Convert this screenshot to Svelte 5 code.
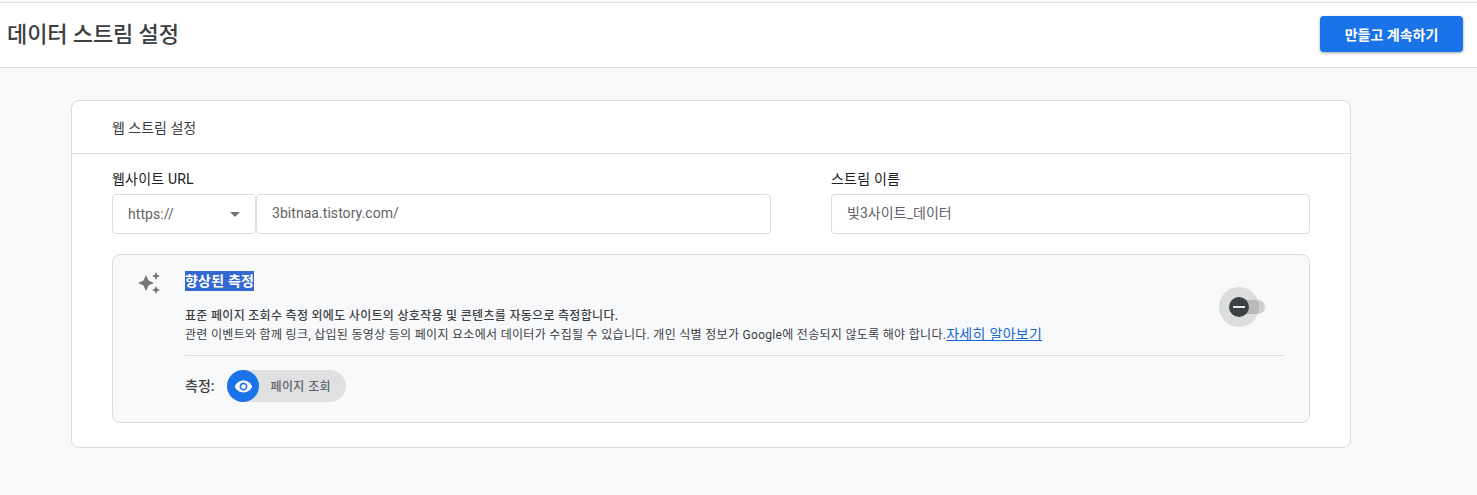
<script>
  let protocol = 'https://';
  let url = '3bitnaa.tistory.com/';
  let streamName = '빛3사이트_데이터';
</script>

<div class="page">
  <header class="topbar">
    <h1>데이터 스트림 설정</h1>
    <button class="primary">만들고 계속하기</button>
  </header>

  <main class="content">
    <section class="card">
      <div class="card-title">웹 스트림 설정</div>
      <div class="fields">
        <div class="field site">
          <span class="label">웹사이트 URL</span>
          <div class="url-row">
            <div class="box select">
              <span>{protocol}</span>
              <span class="caret"></span>
            </div>
            <div class="box url">{url}</div>
          </div>
        </div>
        <div class="field name">
          <span class="label">스트림 이름</span>
          <div class="box">{streamName}</div>
        </div>
      </div>

      <div class="measure">
        <svg class="sparkle" viewBox="0 0 24 24" width="24" height="24" fill="#757575">
          <path d="M19 9l1.25-2.75L23 5l-2.75-1.25L19 1l-1.25 2.75L15 5l2.75 1.25zM11.5 9.5L9 4 6.500 9.500 1 12l5.500 2.500L9 20l2.500-5.500L17 12zM19 15l-1.250 2.750L15 19l2.750 1.250L19 23l1.250-2.750L23 19l-2.750-1.250z" />
        </svg>
        <div class="measure-body">
          <div class="measure-top">
            <div class="measure-text">
              <div class="heading"><span class="selected">향상된 측정</span></div>
              <p class="lead">표준 페이지 조회수 측정 외에도 사이트의 상호작용 및 콘텐츠를 자동으로 측정합니다.</p>
              <p class="desc">관련 이벤트와 함께 링크, 삽입된 동영상 등의 페이지 요소에서 데이터가 수집될 수 있습니다. 개인 식별 정보가 Google에 전송되지 않도록 해야 합니다.<a href="#learn">자세히 알아보기</a></p>
            </div>
            <div class="toggle">
              <span class="track"></span>
              <span class="halo"></span>
              <span class="thumb"><span class="dash"></span></span>
            </div>
          </div>
          <div class="measure-foot">
            <span class="foot-label">측정:</span>
            <span class="chip">
              <span class="chip-icon">
                <svg viewBox="0 0 24 24" width="19" height="19" fill="#fff">
                  <path d="M12 4.500C7 4.500 2.730 7.610 1 12c1.730 4.390 6 7.500 11 7.500s9.270-3.110 11-7.500c-1.730-4.390-6-7.500-11-7.500zM12 17c-2.760 0-5-2.240-5-5s2.240-5 5-5 5 2.240 5 5-2.240 5-5 5zm0-8c-1.660 0-3 1.340-3 3s1.340 3 3 3 3-1.340 3-3-1.340-3-3-3z" />
                </svg>
              </span>
              <span class="chip-text">페이지 조회</span>
            </span>
          </div>
        </div>
      </div>
    </section>
  </main>
</div>

<style>
  :global(body) {
    margin: 0;
    background: #f8f9fa;
  }

  .page {
    height: 495px;
    overflow: hidden;
    font-family: Roboto, "Noto Sans CJK KR", sans-serif;
    color: #3c4043;
    background: #f8f9fa;
  }

  .topbar {
    display: flex;
    align-items: center;
    justify-content: space-between;
    box-sizing: border-box;
    height: 66px;
    margin-top: 2px;
    padding: 0 14px 0 7px;
    background: #fff;
    border-top: 1px solid #dadce0;
    border-bottom: 1px solid #dadce0;
  }

  h1 {
    margin: 0 0 6px;
    font-size: 22px;
    font-weight: 500;
    letter-spacing: -0.1px;
    color: #3c4043;
  }

  .primary {
    width: 143px;
    height: 36px;
    margin-bottom: 2px;
    border: none;
    border-radius: 4px;
    background: #1a73e8;
    color: #fff;
    font-family: inherit;
    font-size: 14px;
    font-weight: 700;
    box-shadow: 0 1px 2px rgba(60, 64, 67, 0.3), 0 1px 3px 1px rgba(60, 64, 67, 0.15);
  }

  .content {
    padding: 32px 126px 0 71px;
  }

  .card {
    box-sizing: border-box;
    height: 348px;
    background: #fff;
    border: 1px solid #dadce0;
    border-radius: 8px;
  }

  .card-title {
    box-sizing: border-box;
    height: 53px;
    padding: 17px 40px 0;
    font-size: 14px;
    line-height: 20px;
    color: #3c4043;
    border-bottom: 1px solid #dadce0;
  }

  .fields {
    display: flex;
    justify-content: space-between;
    padding: 15px 40px 0;
  }

  .field.site {
    width: 659px;
  }

  .field.name {
    width: 479px;
  }

  .label {
    display: block;
    font-size: 14px;
    line-height: 20px;
    letter-spacing: 0.2px;
    margin-bottom: 5px;
    color: #202124;
  }

  .url-row {
    display: flex;
  }

  .box {
    box-sizing: border-box;
    height: 40px;
    padding: 0 15px;
    border: 1px solid #dadce0;
    border-radius: 4px;
    font-size: 14px;
    line-height: 36px;
    letter-spacing: 0.05px;
    color: #5f6368;
    background: #fff;
  }

  .select {
    display: flex;
    align-items: center;
    justify-content: space-between;
    width: 144px;
    flex: none;
    padding-right: 15px;
  }

  .url {
    flex: 1;
  }

  .caret {
    width: 0;
    height: 0;
    border-left: 5px solid transparent;
    border-right: 5px solid transparent;
    border-top: 5px solid #757575;
  }

  .measure {
    box-sizing: border-box;
    display: flex;
    height: 169px;
    margin: 20px 40px 0;
    padding: 16px 24px 0 24px;
    background: #f8f9fa;
    border: 1px solid #dadce0;
    border-radius: 8px;
  }

  .sparkle {
    flex: none;
  }

  .measure-body {
    flex: 1;
    margin-left: 24px;
  }

  .measure-top {
    display: flex;
    justify-content: space-between;
    height: 84px;
    border-bottom: 1px solid #dadce0;
  }

  .heading {
    font-size: 14px;
    font-weight: 700;
    line-height: 20px;
    letter-spacing: 0.2px;
  }

  .selected {
    display: inline-block;
    background: #3367d1;
    color: #fff;
  }

  .lead {
    margin: 16px 0 0;
    font-size: 12px;
    font-weight: 500;
    line-height: 18px;
    letter-spacing: 0.3px;
    color: #3c4043;
  }

  .desc {
    margin: 0;
    font-size: 12px;
    line-height: 18px;
    letter-spacing: 0.3px;
    color: #3c4043;
  }

  .desc a {
    font-size: 14px;
    letter-spacing: 0.3px;
    color: #1967d2;
    text-decoration: underline;
  }

  .toggle {
    position: relative;
    flex: none;
    width: 47px;
    height: 40px;
    margin: 16px 19px 0 0;
  }

  .track {
    position: absolute;
    left: 18px;
    top: 13px;
    width: 28px;
    height: 14px;
    border-radius: 7px;
    background: #cfcfcf;
  }

  .halo {
    position: absolute;
    left: 0;
    top: 0;
    width: 40px;
    height: 40px;
    border-radius: 50%;
    background: rgba(60, 64, 67, 0.15);
  }

  .thumb {
    position: absolute;
    left: 10px;
    top: 10px;
    display: flex;
    align-items: center;
    justify-content: center;
    width: 20px;
    height: 20px;
    border-radius: 50%;
    background: #3c4043;
  }

  .dash {
    width: 12px;
    height: 2px;
    background: #e8e8e8;
  }

  .measure-foot {
    display: flex;
    align-items: center;
    gap: 13px;
    margin-top: 14px;
  }

  .foot-label {
    margin-top: -2px;
    font-size: 14px;
    font-weight: 500;
    color: #3c4043;
  }

  .chip {
    display: flex;
    align-items: center;
    width: 119px;
    height: 32px;
    border-radius: 16px;
    background: #dfe0e2;
  }

  .chip-icon {
    display: flex;
    align-items: center;
    justify-content: center;
    width: 32px;
    height: 32px;
    border-radius: 50%;
    background: #1a73e8;
  }

  .chip-text {
    margin: -2px 0 0 11px;
    font-size: 12px;
    font-weight: 500;
    letter-spacing: 0.4px;
    color: #5f6368;
  }
</style>
